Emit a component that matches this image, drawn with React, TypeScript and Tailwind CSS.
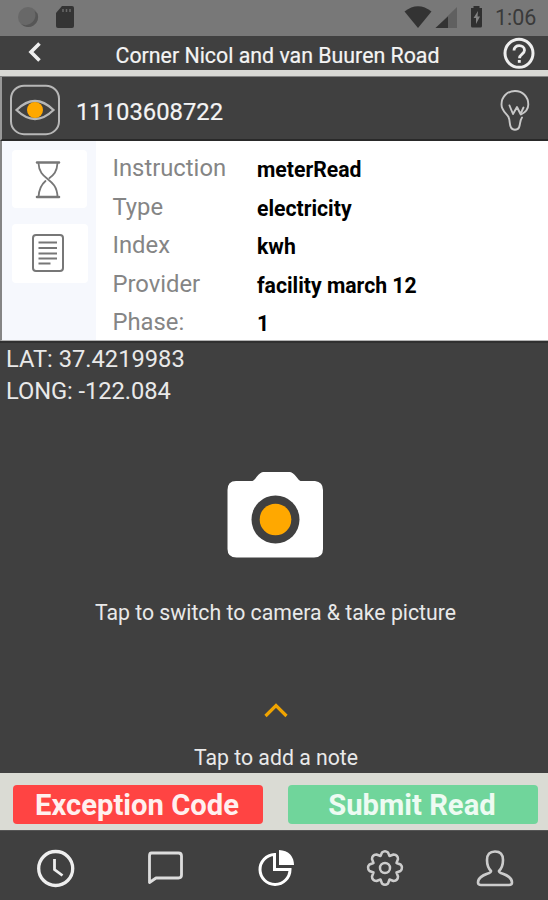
import React from "react";

const rows = [
  ["Instruction", "meterRead"],
  ["Type", "electricity"],
  ["Index", "kwh"],
  ["Provider", "facility march 12"],
  ["Phase:", "1"],
];

function StatusBar() {
  return (
    <div className="flex h-9 items-center bg-[#787878] pl-[17px] pr-[11px]">
      <svg width="58" height="24" viewBox="0 0 58 24" className="-mt-px">
        <circle cx="11" cy="11" r="10" fill="#686868" />
        <path d="M4 18A10 10 0 0 0 20.500 7.500L17.500 5A10 10 0 0 1 4 18Z" fill="#565656" />
        <path d="M45 0h10a2 2 0 0 1 2 2v18a2 2 0 0 1-2 2H41a2 2 0 0 1-2-2V7Z" fill="#343434" />
        <path d="M46 3v3M49.500 3v3M53 3v3" stroke="#686868" strokeWidth="1.500" />
      </svg>
      <svg width="86" height="24" viewBox="0 0 86 24" className="ml-auto mr-[6px]">
        <path d="M0 5.500Q13.500-5 27 5.500L13.500 22Z" transform="translate(7.500 0)" fill="#333" />
        <path d="M60 1v21H38.500Z" fill="#606060" />
        <path d="M51 10.500V22H38.500Z" fill="#333" />
        <path d="M76.500 0h6v2H85v18a1.500 1.500 0 0 1-1.500 1.500h-8A1.500 1.500 0 0 1 74 20V2h2.500Z" fill="#303030" />
        <path d="m81 5-4.500 7h2.500v6l4-7.500h-2.500Z" fill="#828282" />
      </svg>
      <span className="ml-[6px] w-[42px] whitespace-nowrap text-[21.500px] leading-6 text-[#3a3a3a]">1:06</span>
    </div>
  );
}

function Header() {
  return (
    <header className="flex h-[34px] items-center bg-[#404040]">
      <svg width="58" height="34" viewBox="0 0 58 34" fill="none" stroke="#eee" strokeWidth="3.600">
        <path d="m39.500 7.500-8.500 8.500 8.500 8.500" />
      </svg>
      <h1 className="ml-[57.500px] mt-[5px] flex-1 whitespace-nowrap text-[21.350px] leading-[30px] text-[#f4f4f4] [-webkit-text-stroke:0.2px_#f4f4f4]">Corner Nicol and van Buuren Road</h1>
      <svg width="34" height="34" viewBox="0 0 34 34" fill="none" stroke="#eee" className="mr-[12px]">
        <circle cx="17" cy="17.300" r="14" strokeWidth="3" />
        <path d="M12 14.500c0-6.700 10.500-6.200 10.500-.3 0 3.800-5 4-5 8" strokeWidth="2.800" />
        <path d="M17.300 24v2.800" strokeWidth="2.900" />
      </svg>
    </header>
  );
}

function MeterBar() {
  return (
    <div className="flex h-16 items-center border-b-2 border-l-2 border-b-[#292929] border-l-[#999] bg-[#404040]">
      <svg width="52" height="52" viewBox="0 0 52 52" fill="none" stroke="#b7b7b7" className="ml-[7px] mt-1">
        <rect x="2" y="1.700" width="48" height="48.500" rx="13" strokeWidth="2" />
        <path d="M7.500 26q18.500-18 37 0-18.500 18-37 0Z" strokeWidth="2.300" />
        <circle cx="26" cy="26" r="8" fill="#ffa800" stroke="none" />
      </svg>
      <span className="ml-[15px] mt-[8px] whitespace-nowrap text-[23.800px] leading-8 text-[#f4f4f4] [-webkit-text-stroke:0.2px_#f4f4f4]">11103608722</span>
      <svg width="32" height="44" viewBox="0 0 32 44" fill="none" stroke="#c8c8c8" strokeWidth="1.900" strokeLinecap="round" strokeLinejoin="round" className="ml-auto mr-[17px] mt-1">
        <path d="M22 26.500C27 24 29.300 20.500 29.300 16.500 29.300 8.500 23.500 3 16 3S2.500 8.500 2.500 16.500c0 6.500 5 8.500 7 12.500 1.700 3.500.7 7.500 2.500 10.500 1.500 3 6.500 3 8 0 1.500-3 .5-6.500 3-10" />
        <path d="m10.500 17.500 3.500 8.500 4-7 3.500 7 3-6.500" />
      </svg>
    </div>
  );
}

function Details() {
  return (
    <section className="flex h-[200px] border-b border-l-2 border-b-[#b4b4b4] border-l-[#858585] bg-white">
      <aside className="flex w-[94px] flex-col gap-4 bg-[#f6f8fd] pl-[10px] pt-[9px]">
        <div className="flex h-[58px] w-[75px] items-center justify-center rounded bg-white">
          <svg width="28" height="42" viewBox="0 0 28 42" fill="none" stroke="#777" strokeWidth="1.800" strokeLinecap="round" className="ml-[-3px] mt-[2px]">
            <path d="M3 3.500h22M3 38h22" strokeWidth="2.600" />
            <path d="M4.500 4C5 22 23 18 23.500 38M23.500 4c-.5 9-4 12-8 15M4.500 38c.5-9 3.500-13 7-16" />
          </svg>
        </div>
        <div className="flex h-[59px] w-[76px] items-center justify-center rounded bg-white">
          <svg width="32" height="38" viewBox="0 0 32 38" fill="none" stroke="#777" className="-mt-[2px] ml-[-5px]">
            <rect x="1" y="1" width="30" height="36" rx="3" strokeWidth="2" />
            <path d="M6.500 8.500H25M6.500 14H25M6.500 19.500H25M6.500 24.500H25M6.500 29.500H18.500" strokeWidth="1.900" />
          </svg>
        </div>
      </aside>
      <dl className="flex-1 pl-[16.500px] pt-[7px]">
        {rows.map(([label, value]) => (
          <div key={label} className="flex h-[38.600px]">
            <dt className="w-[144.500px] whitespace-nowrap text-[23.800px] leading-10 text-[#858585]">{label}</dt>
            <dd className="mt-[2px] whitespace-nowrap text-[21.200px] font-bold leading-10 text-black">{value}</dd>
          </div>
        ))}
      </dl>
    </section>
  );
}

function Capture() {
  return (
    <main className="flex h-[432px] flex-col items-center border-t-2 border-t-[#303030] bg-[#404040] text-[#e9e9e9]">
      <div className="w-full pl-[6px] text-[23.700px] leading-8">
        <p className="whitespace-nowrap">LAT: 37.4219983</p>
        <p className="whitespace-nowrap tracking-[-0.07px]">LONG: -122.084</p>
      </div>
      <svg width="98" height="88" viewBox="0 0 98 88" className="ml-[3px] mt-[64px] shrink-0">
        <path d="M9 10h16.500q2-1 4-4 4-5 7-5h26q3 0 7 5 2 3 4 4H88q8 1 8 9v59q0 8.500-9 8.500H9.500Q.5 86.500.5 78V19Q.5 10 9 10Z" fill="white" />
        <circle cx="48.500" cy="48.500" r="24" fill="#404040" />
        <circle cx="48.500" cy="48.500" r="15.800" fill="#ffa800" />
      </svg>
      <p className="ml-[3px] mt-[38px] whitespace-nowrap text-[21.250px] leading-8">Tap to switch to camera &amp; take picture</p>
      <svg width="26" height="18" viewBox="0 0 26 18" fill="none" stroke="#f0a400" strokeWidth="3.200" className="ml-[4px] mt-[73px] shrink-0">
        <path d="M2.500 14 13 3.500 23.500 14" />
      </svg>
      <p className="ml-[4px] mt-[24px] whitespace-nowrap text-[21.250px] leading-7">Tap to add a note</p>
    </main>
  );
}

function Actions() {
  return (
    <div className="flex h-[57px] gap-[25px] bg-[#dadbd4] px-[13px] pt-[12px]">
      <button className="h-[39px] w-[250px] shrink-0 whitespace-nowrap rounded bg-[#ff4443] pr-[2px] text-[29.200px] font-bold leading-[41px] text-[#fff0ef]">Exception Code</button>
      <button className="h-[39px] w-[250px] shrink-0 whitespace-nowrap rounded bg-[#70d59b] pr-[2px] text-[29.200px] font-bold leading-[41px] text-[#edfbf2]">Submit Read</button>
    </div>
  );
}

function NavBar() {
  return (
    <nav className="flex h-[70px] items-center justify-between border-t border-t-[#555] bg-[#404040] pl-[34px] pr-[32px]">
      <svg width="42" height="42" viewBox="0 0 42 42" fill="none" stroke="#eee" className="mt-1">
        <circle cx="21.700" cy="21.500" r="17" strokeWidth="3.300" />
        <path d="M20.500 12v10.500l8 6" strokeWidth="2.800" />
      </svg>
      <svg width="42" height="42" viewBox="0 0 42 42" fill="none" stroke="#ddd" strokeWidth="2.800" strokeLinejoin="round" className="mt-1">
        <path d="M7.500 6h27q3 0 3 3v19q0 3-3 3H12l-6.500 4.500V9q0-3 2-3Z" />
      </svg>
      <svg width="42" height="42" viewBox="0 0 42 42" fill="none" stroke="white" strokeWidth="3" className="mt-1">
        <path d="M20.500 7.500A15 15 0 1 0 36 22.500H20.500Z" />
        <path d="M25 3Q39.500 4 40 18H25Z" fill="white" stroke="none" />
      </svg>
      <svg width="42" height="42" viewBox="0 0 42 42" fill="none" stroke="#ccc" strokeWidth="2.500" strokeLinejoin="round" className="mt-1">
        <path d="M18 5.500q3-2.500 6 0l1.500 3.500 4-1.500q4.500.5 4.500 4.500l-1.500 4 4 1.500q3 3 0 6.500l-4 1.500 1.500 4q0 4-4.500 4.500l-4-1.500-1.500 4q-3 2.500-6 0l-1.500-4-4 1.500Q8 33.500 8 29.500l1.500-4-4-1.500q-3-3.500 0-6.500l4-1.500L8 12q0-4 4.500-4.500l4 1.500Z" />
        <circle cx="21" cy="21" r="5" />
      </svg>
      <svg width="42" height="42" viewBox="0 0 42 42" fill="none" stroke="#ccc" strokeWidth="2.600" strokeLinejoin="round" className="mt-1">
        <path d="M17 24q-4-4-4-11 0-8.500 8-8.500t8 8.500q0 7-4 11c-1 3 13 3 13 11.500q0 2.500-3 2.500H7q-3 0-3-2.500C4 27 18 27 17 24Z" />
      </svg>
    </nav>
  );
}

export default function App() {
  return (
    <div className="flex h-[900px] w-[548px] flex-col overflow-hidden bg-[#404040] font-['Roboto',sans-serif]">
      <StatusBar />
      <Header />
      <div className="h-[7px] border-b border-b-[#858585] bg-[#d9d9d5]" />
      <MeterBar />
      <Details />
      <Capture />
      <Actions />
      <NavBar />
    </div>
  );
}
